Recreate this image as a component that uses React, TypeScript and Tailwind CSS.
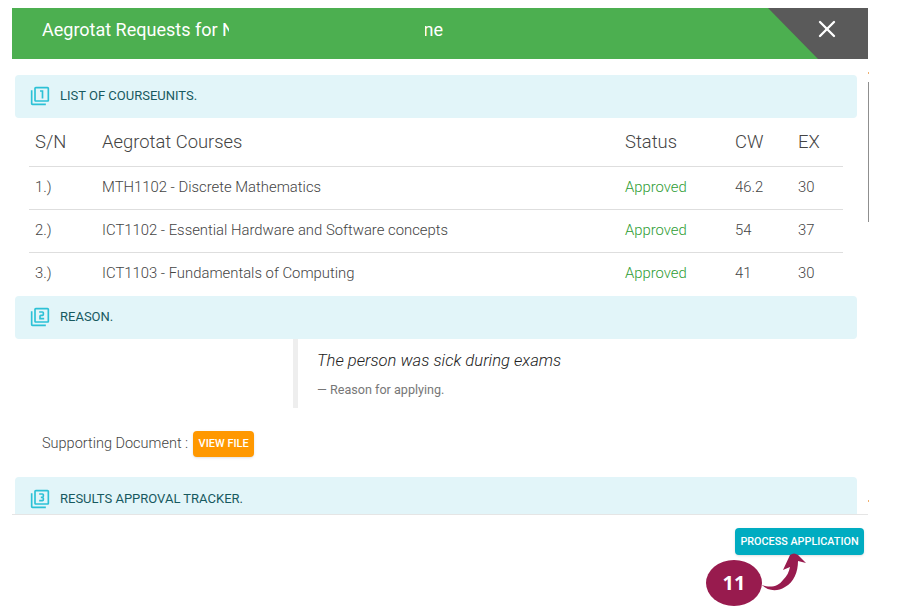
import { X } from "lucide-react";
import { MdFilter1, MdFilter2, MdFilter3 } from "react-icons/md";
import type { ReactNode } from "react";

const courses = [
  { sn: "1.)", name: "MTH1102 - Discrete Mathematics", status: "Approved", cw: "46.2", ex: "30" },
  { sn: "2.)", name: "ICT1102 - Essential Hardware and Software concepts", status: "Approved", cw: "54", ex: "37" },
  { sn: "3.)", name: "ICT1103 - Fundamentals of Computing", status: "Approved", cw: "41", ex: "30" },
];

const SectionBar = ({ icon, title, className }: { icon: ReactNode; title: string; className: string }) => (
  <div className={`flex items-center bg-[#e2f5f9] rounded pl-[15px] shrink-0 ${className}`}>
    <span className="w-[30px] text-[#2cc1d6]">{icon}</span>
    <span className="text-[13px] text-[#17595f] uppercase">{title}</span>
  </div>
);

export default function App() {
  return (
    <div className="relative h-[611px] w-[898px] overflow-hidden bg-white font-['Roboto',sans-serif]">
      <div className="ml-3 pt-2 w-[856px]">
        <header className="relative flex items-center h-[51px] bg-[#4caf50] pb-2 pl-[30px] text-white text-[18px]">
          <span className="w-[187px] overflow-hidden whitespace-nowrap">Aegrotat Requests for N</span>
          <span className="ml-[196px] flex w-[18px] justify-end overflow-hidden">ne</span>
          <div className="absolute right-0 top-0 h-[51px] w-[100px] bg-[#5a5a5a] [clip-path:polygon(0_0,100%_0,100%_100%,50%_100%)]" />
          <X className="absolute left-[801px] top-[7px] text-white" size={28} strokeWidth={2} />
        </header>

        <main className="flex flex-col h-[455px] overflow-hidden pl-[3px] pr-[11px] pt-4">
          <SectionBar className="h-[43px] pb-px" icon={<MdFilter1 size={20} />} title="List of courseunits." />

          <table className="ml-[14px] w-[814px] table-fixed border-collapse text-[14.85px] font-light text-[#444] shrink-0">
            <colgroup>
              <col className="w-[73px]" />
              <col className="w-[523px]" />
              <col className="w-[110px]" />
              <col className="w-[63px]" />
              <col className="w-[45px]" />
            </colgroup>
            <thead>
              <tr className="h-[48px] border-b border-[#dedede] text-left text-[18.4px]">
                <th className="pl-[6px] font-light">S/N</th>
                <th className="font-light">Aegrotat Courses</th>
                <th className="font-light">Status</th>
                <th className="font-light">CW</th>
                <th className="font-light">EX</th>
              </tr>
            </thead>
            <tbody>
              {courses.map((c, i) => (
                <tr key={c.sn} className={i < 2 ? "h-[43px] border-b border-[#dedede]" : "h-[42px]"}>
                  <td className="pl-[6px]">{c.sn}</td>
                  <td>{c.name}</td>
                  <td className="text-[#2e9c33]">{c.status}</td>
                  <td>{c.cw}</td>
                  <td>{c.ex}</td>
                </tr>
              ))}
            </tbody>
          </table>

          <SectionBar className="h-[43px] mt-[2px] pb-px" icon={<MdFilter2 size={20} />} title="Reason." />

          <blockquote className="ml-[278px] h-[69px] shrink-0 border-l-[5px] border-[#eeeeee] pl-[19px] pt-[10px]">
            <p className="text-[16.6px] leading-[24px] italic font-light text-[#222]">The person was sick during exams</p>
            <p className="mt-[7px] text-[12.6px] leading-[20px] text-[#777]">— Reason for applying.</p>
          </blockquote>

          <div className="flex items-center ml-[27px] mt-[23px] shrink-0">
            <span className="text-[14.5px] font-light text-[#444]">Supporting Document :</span>
            <button className="ml-[5px] h-[26px] w-[61px] rounded-sm bg-[#ff9800] text-[11px] font-medium text-white uppercase shadow-sm">
              View file
            </button>
          </div>

          <SectionBar className="h-[43px] mt-[20px]" icon={<MdFilter3 size={20} />} title="Results approval tracker." />
        </main>

        <footer className="flex justify-end border-t border-[#e5e5e5] pt-[13px] pr-1">
          <button className="h-[27px] w-[129px] rounded-sm bg-[#00acc1] pt-px text-[10.8px] font-medium text-white uppercase shadow-sm">
            Process application
          </button>
        </footer>
      </div>

      <div className="absolute left-[868px] top-[82px] h-[140px] w-px bg-[#8f8f8f]" />
      <div className="absolute left-[868px] top-[72px] h-[2px] w-px bg-[#f0b070]" />
      <div className="absolute left-[868px] top-[500px] h-[2px] w-px bg-[#f0b070]" />

      <div className="absolute left-[706px] top-[560px] flex h-[46px] w-[56px] items-center justify-center rounded-[50%] bg-[#981b4e] font-['Open_Sans',sans-serif] text-[20px] font-bold text-white">
        11
      </div>
      <svg className="absolute left-[760px] top-[550px]" width="50" height="46" viewBox="0 0 50 46" fill="#981b4e">
        <path d="M2 35C10 38 18 37 23 30C27 26 29 22 30 17L23 20L30 5Q34 2 38 5L46 13L38 11C38 22 34 32 25 37C17 42 8 41 2 35Z" />
      </svg>
    </div>
  );
}
